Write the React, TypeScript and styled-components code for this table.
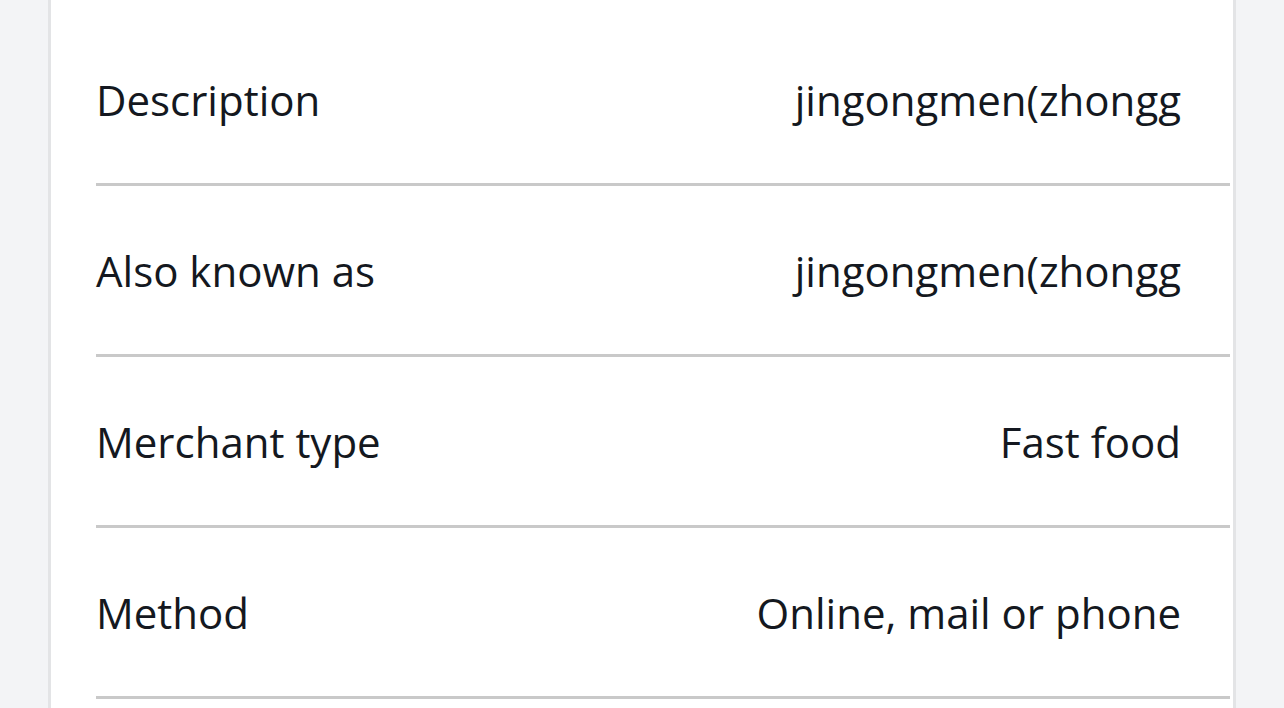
import React from "react";
import styled, { createGlobalStyle } from "styled-components";

const GlobalStyle = createGlobalStyle`
  html, body {
    margin: 0;
    padding: 0;
    background: #f3f4f6;
    font-family: "Open Sans", "Noto Sans", sans-serif;
    overflow: hidden;
  }
`;

const Page = styled.div`
  height: 708px;
  padding-left: 48px;
  box-sizing: border-box;
`;

const Card = styled.div`
  width: 1188px;
  height: 100%;
  box-sizing: border-box;
  background: #ffffff;
  border-left: 3px solid #e3e4e6;
  border-right: 3px solid #e3e4e6;
  padding: 15px 3px 0 45px;
`;

const Row = styled.div`
  display: flex;
  align-items: center;
  justify-content: space-between;
  height: 168px;
  padding: 3px 49px 0 0;
  box-sizing: content-box;
  border-bottom: 3px solid #c9c9c9;
  margin-top: -3px;
  font-size: 42px;
  color: #141820;
`;

const Label = styled.span`
  white-space: nowrap;
`;

const Value = styled.span`
  white-space: nowrap;
  text-align: right;
`;

const details = [
  { label: "Description", value: "jingongmen(zhongg" },
  { label: "Also known as", value: "jingongmen(zhongg" },
  { label: "Merchant type", value: "Fast food" },
  { label: "Method", value: "Online, mail or phone" },
];

const App = (): JSX.Element => (
  <>
    <GlobalStyle />
    <Page>
      <Card>
        {details.map((d) => (
          <Row key={d.label}>
            <Label>{d.label}</Label>
            <Value>{d.value}</Value>
          </Row>
        ))}
      </Card>
    </Page>
  </>
);

export default App;
